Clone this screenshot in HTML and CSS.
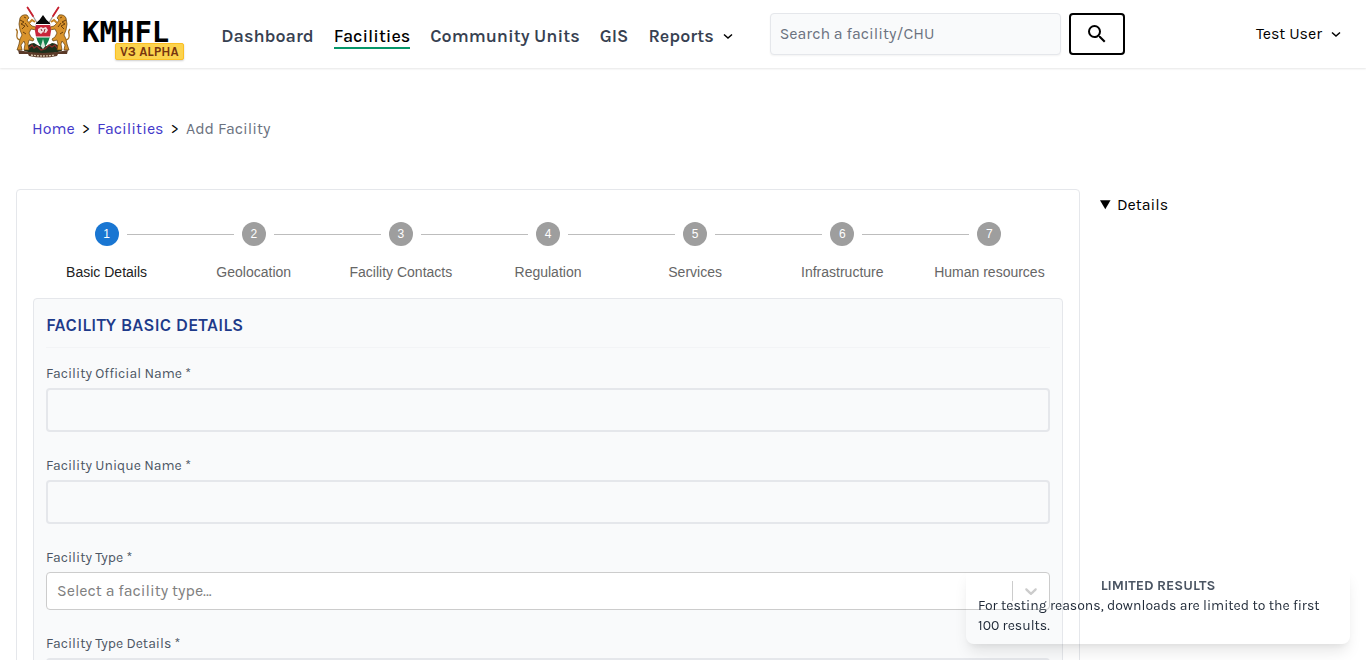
FILE: index.html
```html
<!DOCTYPE html>
<html lang="en">
<head>
<meta charset="utf-8">
<title>KMHFL - Add Facility</title>
<link rel="stylesheet" href="styles.css">
</head>
<body>
<header class="topbar">
  <a class="brand" href="#" aria-label="KMHFL home">
    <svg class="crest" viewBox="0 0 56 52" aria-hidden="true">
      <g stroke-linecap="round">
        <path d="M13 2 L24 20 M43 2 L32 20" stroke="#a59a96" stroke-width="1.2"/>
        <path d="M12.500 1.500 L18 10 M43.500 1.500 L38 10" stroke="#c8202f" stroke-width="1.8"/>
      </g>
      <path d="M9 45 Q13 37 19 37 Q28 44 37 37 Q43 37 47 45 Q28 51 9 45Z" fill="#1c2f1c"/>
      <path d="M14 42l3-3 2 3 3-2 4 4 4-1 4-4 3 2 3-2 2 3" fill="none" stroke="#8c2b2a" stroke-width="1.3"/>
      <g id="lion">
        <path d="M5 12 Q7 8 12 9 L14 12 L12 14 L14 17 L17 20 L21 21 L21 24 L16 23 L14 27 L16 31 L19 33 L18 35 L14 34 L13 38 L14 44 L9 44 L10 38 L9 35 L6 39 L7 44 L2 44 L4 38 L5 33 L7 29 L5 24 L4 18Z" fill="#d9932c" stroke="#5f3c0c" stroke-width=".7"/>
        <path d="M14 17 L17 14 L20 16" fill="none" stroke="#c98522" stroke-width="2"/>
        <path d="M5 14l4 2-3 2 4 2-3 3M8 26l3 2M9 11l2 1M10 17l3 4" fill="none" stroke="#6b400c" stroke-width="1"/>
        <path d="M5 34 Q1 33 2 28 Q3 25 1 23" fill="none" stroke="#a86f1f" stroke-width="1.3"/>
      </g>
      <use href="#lion" transform="translate(56 0) scale(-1 1)"/>
      <clipPath id="shield"><path d="M28 9 Q31 14 35 17 L36 25 Q35 36 28 43 Q21 36 20 25 L21 17 Q25 14 28 9Z"/></clipPath>
      <g clip-path="url(#shield)">
        <path d="M18 8h20v11H18z" fill="#080808"/>
        <path d="M18 19h20v12H18z" fill="#c8243a"/>
        <path d="M18 31h20v14H18z" fill="#14804a"/>
        <path d="M18 18.500h20M18 31h20" stroke="#fff" stroke-width="1.2"/>
        <path d="M28 33l3 10h-6z" fill="#d8e4d8"/>
      </g>
      <path d="M23 23l3-2 2 1 3-1 2 3-2 3-3-1-2 2-3-2z" fill="#f2dfdf"/>
      <path d="M26 23l1 2M30 23l-1 3" stroke="#8c2434"/>
      <path d="M3 44 Q28 50 53 44 L52 48 L43 48 L42 50 Q28 53 14 50 L13 48 L4 48Z" fill="#5a3a28"/>
      <path d="M16 49 Q28 51 40 49" fill="none" stroke="#d8c7ad" stroke-width="1.3" stroke-dasharray="2 1"/>
    </svg>
    <span class="wordmark">KMHFL<span class="version">V3 ALPHA</span></span>
  </a>
  <nav class="mainnav" aria-label="Main">
    <a href="#">Dashboard</a>
    <a href="#" class="current" aria-current="page">Facilities</a>
    <a href="#">Community Units</a>
    <a href="#">GIS</a>
    <button type="button" class="menu">Reports
      <svg class="caret" viewBox="0 0 24 24" aria-hidden="true"><path d="M4 9l8 7 8-7"/></svg>
    </button>
  </nav>
  <form class="search" role="search">
    <input type="search" aria-label="Search a facility/CHU" placeholder="Search a facility/CHU">
    <button type="button" aria-label="Search">
      <svg viewBox="0 0 24 24" aria-hidden="true"><path d="M15.500 14h-.79l-.28-.27A6.470 6.470 0 0 0 16 9.500 6.500 6.500 0 1 0 9.500 16c1.610 0 3.090-.59 4.230-1.570l.27.28v.79l5 4.990L20.490 19l-4.990-5zm-6 0C7.010 14 5 11.990 5 9.500S7.010 5 9.500 5 14 7.010 14 9.500 11.990 14 9.500 14z"/></svg>
    </button>
  </form>
  <button type="button" class="user">Test User
    <svg class="caret" viewBox="0 0 24 24" aria-hidden="true"><path d="M4 9l8 7 8-7"/></svg>
  </button>
</header>

<main class="page">
  <nav class="crumbs" aria-label="Breadcrumb">
    <a href="#">Home</a><span class="sep">&gt;</span><a href="#">Facilities</a><span class="sep">&gt;</span><span class="here">Add Facility</span>
  </nav>
  <div class="columns">
    <section class="panel">
      <ol class="steps">
        <li class="active"><span class="mark"><b>1</b></span>Basic Details</li>
        <li><span class="mark"><b>2</b></span>Geolocation</li>
        <li><span class="mark"><b>3</b></span>Facility Contacts</li>
        <li><span class="mark"><b>4</b></span>Regulation</li>
        <li><span class="mark"><b>5</b></span>Services</li>
        <li><span class="mark"><b>6</b></span>Infrastructure</li>
        <li><span class="mark"><b>7</b></span>Human resources</li>
      </ol>
      <form class="card">
        <h1>FACILITY BASIC DETAILS</h1>
        <div class="field">
          <label for="official">Facility Official Name *</label>
          <input id="official" type="text">
        </div>
        <div class="field">
          <label for="unique">Facility Unique Name *</label>
          <input id="unique" type="text">
        </div>
        <div class="field">
          <label for="type">Facility Type *</label>
          <div class="picker">
            <select id="type"><option>Select a facility type...</option></select>
            <svg viewBox="0 0 20 20" aria-hidden="true"><path d="M4.516 7.548c.436-.446 1.043-.481 1.576 0L10 11.295l3.908-3.747c.533-.481 1.141-.446 1.574 0 .436.445.408 1.197 0 1.615-.406.418-4.695 4.502-4.695 4.502a1.095 1.095 0 0 1-1.576 0S4.924 9.581 4.516 9.163s-.436-1.170 0-1.615z"/></svg>
          </div>
        </div>
        <div class="field">
          <label for="details">Facility Type Details *</label>
          <input id="details" type="text">
        </div>
      </form>
    </section>
    <aside class="side">
      <details open><summary>Details</summary></details>
    </aside>
  </div>
</main>

<div class="notice" role="status">
  <h2>LIMITED RESULTS</h2>
  <p>For testing reasons, downloads are limited to the first 100 results.</p>
</div>
</body>
</html>
```
FILE: styles.css
```css
* { box-sizing: border-box; }

body {
  margin: 0;
  background: #fff;
  color: #000;
  font: 16px/24px Karla, Roboto, "Liberation Sans", sans-serif;
}

a { text-decoration: none; color: inherit; }
button, input, select { font: inherit; color: inherit; }
button { background: none; border: 0; padding: 0; cursor: pointer; }
h1, h2, p, ol { margin: 0; padding: 0; }

.topbar {
  display: flex;
  align-items: center;
  height: 68px;
  padding: 0 24px 0 15px;
  box-shadow: 0 1px 2px rgba(0, 0, 0, .1);
}

.brand { display: flex; align-items: center; gap: 11px; }
.crest { width: 56px; height: 52px; margin-bottom: 4px; }
.wordmark {
  position: relative;
  font: bold 29px/36px "DejaVu Sans Mono", monospace;
  margin-bottom: 4px;
}
.version {
  position: absolute;
  left: 33px;
  top: 29px;
  padding: 0 4px;
  border: 1px solid #fbbf24;
  border-radius: 2px;
  background: #fcd34d;
  color: #78350f;
  font: bold 13px/15px Karla, Roboto, "Liberation Sans", sans-serif;
  white-space: nowrap;
  box-shadow: 0 1px 2px rgba(0, 0, 0, .2);
}

.mainnav {
  display: flex;
  align-items: flex-start;
  gap: 20px;
  margin: 6px 0 0 52px;
  color: #374151;
  font-size: 18px;
  font-weight: 600;
  line-height: 22px;
}
.mainnav a { border-bottom: 2px solid transparent; }
.mainnav .current { color: #000; border-color: #059669; font-weight: 500; }
.menu, .user { display: flex; align-items: center; gap: 8px; }
.caret { width: 12px; height: 12px; fill: none; stroke: #000; stroke-width: 3; }

.search { display: flex; gap: 8px; margin-left: 36px; }
.search input {
  width: 291px;
  height: 42px;
  padding: 0 9px 2px;
  border: 1px solid #e5e7eb;
  border-radius: 4px;
  background: #f9fafb;
  box-shadow: 0 1px 2px rgba(0, 0, 0, .05);
}
.search input::placeholder { color: #6b7280; opacity: 1; }
.search button {
  display: grid;
  place-items: center;
  width: 56px;
  height: 42px;
  border: 2px solid #000;
  border-radius: 4px;
}
.search svg { width: 24px; height: 24px; }
.user { margin-left: auto; }

.page { padding: 0 16px; }
.crumbs { display: flex; gap: 7px; padding: 49px 16px 48px; }
.crumbs a { color: #4338ca; }
.crumbs .here { color: #6b7280; }

.columns { display: grid; grid-template-columns: repeat(5, 1fr); gap: 16px; }
.panel {
  grid-column: span 4;
  padding: 32px 16px 16px;
  border: 1px solid #e5e7eb;
  border-radius: 4px;
}
.side { padding: 4px; }

.steps {
  display: grid;
  grid-template-columns: repeat(7, 1fr);
  margin-bottom: 16px;
  list-style: none;
  text-align: center;
  color: #666;
  font: 14px/20px "Liberation Sans", Arial, sans-serif;
}
.steps .active { color: #212121; }
.mark { display: flex; align-items: center; gap: 8px; margin-bottom: 16px; }
.mark::before, .mark::after { content: ""; flex: 1; height: 1px; background: #bdbdbd; }
.steps li:first-child .mark::before, .steps li:last-child .mark::after { background: none; }
.mark b {
  width: 24px;
  border-radius: 50%;
  background: #9e9e9e;
  color: #fff;
  font-size: 12px;
  font-weight: normal;
  line-height: 24px;
}
.active .mark b { background: #1976d2; }

.card {
  display: grid;
  gap: 24px;
  padding: 12px;
  border: 1px solid #e5e7eb;
  border-radius: 4px;
  background: #f9fafb;
}
.card h1 {
  margin-bottom: -8px;
  padding-bottom: 8px;
  border-bottom: 1px solid #f3f4f6;
  color: #1e3a8a;
  font-size: 18px;
  font-weight: 600;
  line-height: 28px;
}
.field { display: grid; gap: 4px; }
.field label { color: #4b5563; font-size: 14px; line-height: 20px; }
.field input {
  width: 100%;
  height: 44px;
  padding: 0 8px;
  border: 2px solid #e5e7eb;
  border-radius: 4px;
  background: #f9fafb;
}
.picker { position: relative; }
.picker select {
  display: block;
  width: 100%;
  height: 38px;
  padding: 0 10px;
  appearance: none;
  border: 1px solid #ccc;
  border-radius: 4px;
  background: #fff;
  color: #808080;
}
.picker svg {
  position: absolute;
  top: 9px;
  right: 1px;
  width: 37px;
  height: 20px;
  border-left: 1px solid #ccc;
  fill: #ccc;
  pointer-events: none;
}

.notice {
  position: fixed;
  right: 16px;
  bottom: 16px;
  width: 384px;
  padding: 8px 12px;
  border-radius: 8px;
  color: #1f2937;
  font-size: 14px;
  line-height: 20px;
  box-shadow: 0 10px 15px -3px rgba(0, 0, 0, .1), 0 4px 6px -2px rgba(0, 0, 0, .05);
}
.notice h2 { color: #4b5563; font-size: 14px; line-height: 20px; text-align: center; }
```
